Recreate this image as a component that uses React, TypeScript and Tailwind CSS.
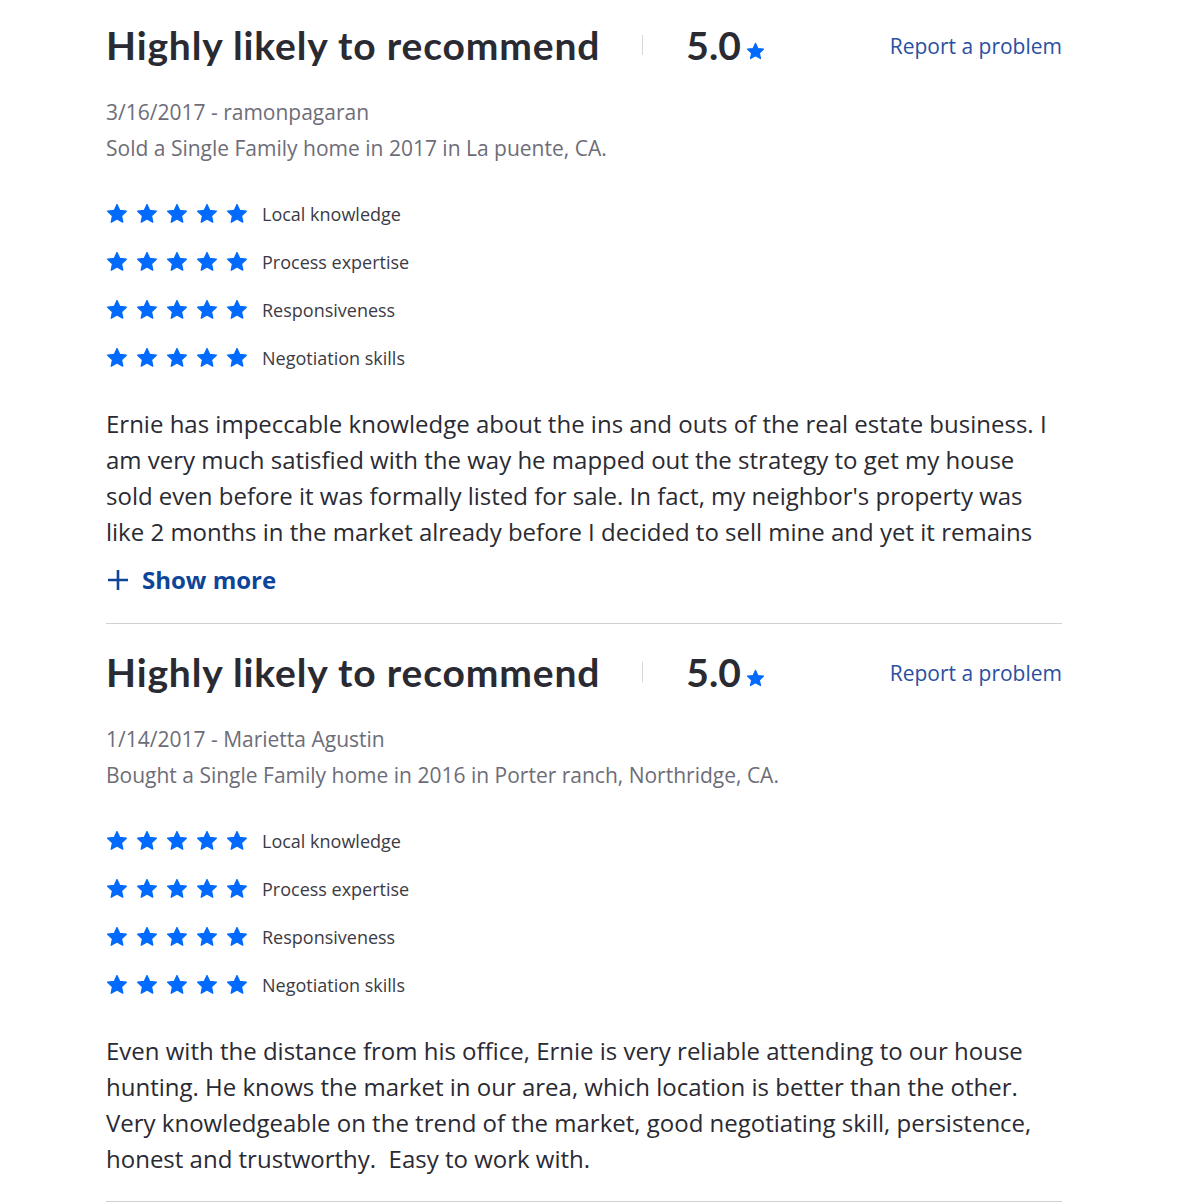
import React from 'react';

const categories = ['Local knowledge', 'Process expertise', 'Responsiveness', 'Negotiation skills'];

const reviews = [
  {
    date: '3/16/2017',
    author: 'ramonpagaran',
    summary: 'Sold a Single Family home in 2017 in La puente, CA.',
    body:
      "Ernie has impeccable knowledge about the ins and outs of the real estate business. I am very much satisfied with the way he mapped out the strategy to get my house sold even before it was formally listed for sale. In fact, my neighbor's property was like 2 months in the market already before I decided to sell mine and yet it remains",
    clipped: true,
  },
  {
    date: '1/14/2017',
    author: 'Marietta Agustin',
    summary: 'Bought a Single Family home in 2016 in Porter ranch, Northridge, CA.',
    body:
      'Even with the distance from his office, Ernie is very reliable attending to our house hunting. He knows the market in our area, which location is better than the other. Very knowledgeable on the trend of the market, good negotiating skill, persistence, honest and trustworthy.\u00a0 Easy to work with.',
    clipped: false,
  },
];

function Star({ className }: { className?: string }) {
  return (
    <svg viewBox="0 0 24 24" className={className} fill="currentColor">
      <path
        d="M12 1.6l3.05 6.55 7.15.86-5.27 4.9 1.38 7.07L12 17.5l-6.31 3.48 1.38-7.07-5.27-4.9 7.15-.86z"
        stroke="currentColor"
        strokeWidth="1.4"
        strokeLinejoin="round"
      />
    </svg>
  );
}

function Review({ review }: { review: (typeof reviews)[number] }) {
  return (
    <article
      className={`border-b border-[#d1d1d5] pt-6 first:pt-[21px] ${review.clipped ? 'pb-[25px]' : 'pb-6'}`}
    >
      {/* Header */}
      <div className="flex items-center justify-between h-12">
        <div className="flex items-center">
          <h2 className="font-['Lato'] font-bold text-[39px] leading-[48px] text-[#2a2a33] tracking-[0.85px]">
            Highly likely to recommend
          </h2>
          <span className="ml-[42px] mr-[43px] h-[20px] w-px bg-[#d6d6da]"></span>
          <span className="font-['Lato'] font-bold text-[39px] leading-[48px] text-[#2a2a33]">5.0</span>
          <Star className="ml-[5px] mt-[12px] w-[19px] h-[19px] text-[#006aff]" />
        </div>
        <a href="#" className="mt-[3px] font-['Open_Sans'] text-[21px] text-[#2a4f9f]">
          Report a problem
        </a>
      </div>

      {/* Meta */}
      <div className="mt-[25px] font-['Open_Sans'] text-[21px] leading-[36px] text-[#6d6d78]">
        <div>
          {review.date} - {review.author}
        </div>
        <div>{review.summary}</div>
      </div>

      {/* Ratings */}
      <ul className="mt-[24px]">
        {categories.map((c) => (
          <li key={c} className="flex items-center h-12">
            <div className="flex gap-[8px]">
              {[0, 1, 2, 3, 4].map((i) => (
                <Star key={i} className="w-[22px] h-[22px] text-[#006aff]" />
              ))}
            </div>
            <span className="ml-[14px] font-['Open_Sans'] text-[18px] text-[#3b3b45]">{c}</span>
          </li>
        ))}
      </ul>

      {/* Body */}
      <p className="mt-[24px] font-['Open_Sans'] text-[24px] leading-[36px] text-[#2a2a33]">{review.body}</p>

      {review.clipped && (
        <button className="mt-3 flex items-center h-9 font-['Open_Sans'] font-bold text-[24px] text-[#0d4599]">
          <svg viewBox="0 0 24 24" className="w-[24px] h-[24px] mr-[12px]" fill="none" stroke="currentColor" strokeWidth="2.6">
            <path d="M12 2v20M2 12h20" />
          </svg>
          Show more
        </button>
      )}
    </article>
  );
}

export default function App() {
  return (
    <div className="bg-white min-h-[1203px]">
      <div className="ml-[106px] w-[956px]">
        {reviews.map((r) => (
          <Review key={r.date} review={r} />
        ))}
      </div>
    </div>
  );
}
